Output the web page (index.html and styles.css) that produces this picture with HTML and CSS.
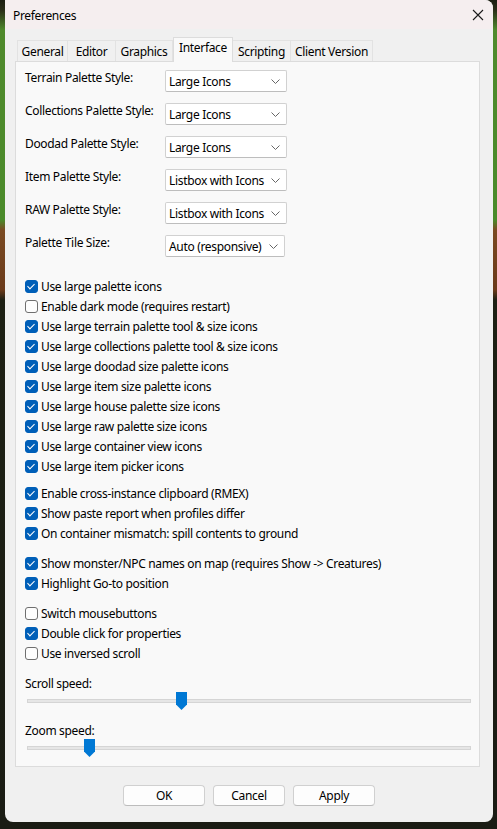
FILE: index.html
```html
<!DOCTYPE html>
<html>
<head>
<meta charset="utf-8">
<link rel="stylesheet" href="styles.css">
</head>
<body>
<div class="dialog">
  <div class="titlebar">
    <span class="title">Preferences</span>
    <svg class="close" width="12" height="12" viewBox="0 0 12 12"><path d="M1 1L11 11M11 1L1 11" stroke="#1a1a1a" stroke-width="1.1" fill="none"/></svg>
  </div>
  <div class="content">
    <div class="tabs">
      <div class="tab t1">General</div>
      <div class="tab t2">Editor</div>
      <div class="tab t3">Graphics</div>
      <div class="tab active">Interface</div>
      <div class="tab t5">Scripting</div>
      <div class="tab t6">Client Version</div>
    </div>
    <div class="panel">
      <div class="selects">
        <div class="srow"><span class="slabel">Terrain Palette Style:</span><div class="select"><span>Large Icons</span><svg class="chev" width="9" height="5" viewBox="0 0 9 5"><path d="M0.5 0.5L4.5 4.5L8.5 0.5" stroke="#666" fill="none"/></svg></div></div>
        <div class="srow"><span class="slabel">Collections Palette Style:</span><div class="select"><span>Large Icons</span><svg class="chev" width="9" height="5" viewBox="0 0 9 5"><path d="M0.5 0.5L4.5 4.5L8.5 0.5" stroke="#666" fill="none"/></svg></div></div>
        <div class="srow"><span class="slabel">Doodad Palette Style:</span><div class="select"><span>Large Icons</span><svg class="chev" width="9" height="5" viewBox="0 0 9 5"><path d="M0.5 0.5L4.5 4.5L8.5 0.5" stroke="#666" fill="none"/></svg></div></div>
        <div class="srow"><span class="slabel">Item Palette Style:</span><div class="select"><span>Listbox with Icons</span><svg class="chev" width="9" height="5" viewBox="0 0 9 5"><path d="M0.5 0.5L4.5 4.5L8.5 0.5" stroke="#666" fill="none"/></svg></div></div>
        <div class="srow"><span class="slabel">RAW Palette Style:</span><div class="select"><span>Listbox with Icons</span><svg class="chev" width="9" height="5" viewBox="0 0 9 5"><path d="M0.5 0.5L4.5 4.5L8.5 0.5" stroke="#666" fill="none"/></svg></div></div>
        <div class="srow"><span class="slabel">Palette Tile Size:</span><div class="select narrow"><span>Auto (responsive)</span><svg class="chev" width="9" height="5" viewBox="0 0 9 5"><path d="M0.5 0.5L4.5 4.5L8.5 0.5" stroke="#666" fill="none"/></svg></div></div>
      </div>

      <div class="group g1">
        <div class="check"><span class="box on"></span>Use large palette icons</div>
        <div class="check"><span class="box"></span>Enable dark mode (requires restart)</div>
        <div class="check"><span class="box on"></span>Use large terrain palette tool &amp; size icons</div>
        <div class="check"><span class="box on"></span>Use large collections palette tool &amp; size icons</div>
        <div class="check"><span class="box on"></span>Use large doodad size palette icons</div>
        <div class="check"><span class="box on"></span>Use large item size palette icons</div>
        <div class="check"><span class="box on"></span>Use large house palette size icons</div>
        <div class="check"><span class="box on"></span>Use large raw palette size icons</div>
        <div class="check"><span class="box on"></span>Use large container view icons</div>
        <div class="check"><span class="box on"></span>Use large item picker icons</div>
      </div>
      <div class="group g2">
        <div class="check"><span class="box on"></span>Enable cross-instance clipboard (RMEX)</div>
        <div class="check"><span class="box on"></span>Show paste report when profiles differ</div>
        <div class="check"><span class="box on"></span>On container mismatch: spill contents to ground</div>
      </div>
      <div class="group g3">
        <div class="check"><span class="box on"></span>Show monster/NPC names on map (requires Show -&gt; Creatures)</div>
        <div class="check"><span class="box on"></span>Highlight Go-to position</div>
      </div>
      <div class="group g3">
        <div class="check"><span class="box"></span>Switch mousebuttons</div>
        <div class="check"><span class="box on"></span>Double click for properties</div>
        <div class="check"><span class="box"></span>Use inversed scroll</div>
      </div>

      <div class="slider-label first">Scroll speed:</div>
      <div class="slider"><div class="track"></div><div class="thumb" style="left:149px"></div></div>
      <div class="slider-label">Zoom speed:</div>
      <div class="slider"><div class="track"></div><div class="thumb" style="left:57px"></div></div>
    </div>
    <div class="buttons">
      <div class="btn ok">OK</div>
      <div class="btn cancel">Cancel</div>
      <div class="btn apply">Apply</div>
    </div>
  </div>
</div>
</body>
</html>
```
FILE: styles.css
```css
* { box-sizing: border-box; }
html, body { margin: 0; padding: 0; }
body {
  width: 497px;
  height: 829px;
  overflow: hidden;
  background: linear-gradient(to bottom, #1c1f12 0px, #2a2e18 10px, #4f8a2c 30px, #4a8a2a 220px, #7a4a22 230px, #6a3a1a 290px, #1d2014 300px, #1a1c14 829px);
  font-family: "Noto Sans", "Open Sans", sans-serif;
  font-size: 12px;
  letter-spacing: -0.33px;
  color: #000;
}
.dialog {
  margin-left: 5px;
  width: 488px;
  height: 822px;
  background: #f0f0f0;
  border-radius: 0 8px 8px 8px;
  overflow: hidden;
  display: flex;
  flex-direction: column;
}
.titlebar {
  height: 29px;
  background: #f5eeef;
  display: flex;
  align-items: center;
  justify-content: space-between;
  padding: 0 9px 0 8px;
  flex-shrink: 0;
}
.title { font-size: 12px; padding-top: 1px; }
.close { margin-top: 1px; }
.content {
  flex: 1;
  padding: 10px 13px 0 10px;
  display: flex;
  flex-direction: column;
}
.tabs {
  display: flex;
  align-items: flex-end;
  height: 22px;
  padding-left: 2px;
  position: relative;
  z-index: 1;
}
.tab {
  height: 21px;
  border: 1px solid #e2e2e2;
  border-bottom: none;
  background: #f0f0f0;
  line-height: 20px;
  padding-top: 1px;
  text-align: center;
}
.t1 { width: 51px; }
.t2 { width: 48px; border-left: none; }
.t3 { width: 57px; border-left: none; }
.active {
  width: 60px;
  height: 25px;
  background: #f9f9f9;
  border-color: #dcdcdc;
  line-height: 18px;
  margin-bottom: -1px;
}
.t5 { width: 58px; border-left: none; }
.t6 { width: 82px; border-left: none; }
.panel {
  height: 706px;
  background: #f9f9f9;
  border: 1px solid #dcdcdc;
  padding: 8px 9px 0 9px;
  display: flex;
  flex-direction: column;
}
.selects { display: flex; flex-direction: column; gap: 11px; }
.srow {
  display: flex;
  align-items: flex-start;
  height: 22px;
}
.slabel { width: 140px; line-height: 14px; padding-top: 1px; }
.select {
  width: 122px;
  height: 22px;
  background: #fff;
  border: 1px solid #d1d1d1;
  border-bottom-color: #bdbdbd;
  border-radius: 2px;
  display: flex;
  align-items: center;
  justify-content: space-between;
  padding: 0 6px 0 3px;
}
.select.narrow { width: 120px; }
.group { display: flex; flex-direction: column; }
.g1 { margin-top: 19px; }
.g2 { margin-top: 7px; }
.g3 { margin-top: 10px; }
.check {
  height: 20px;
  display: flex;
  align-items: center;
  white-space: nowrap;
}
.box {
  width: 13px;
  height: 13px;
  border: 1px solid #6f6f6f;
  border-radius: 3px;
  background: #fdfdfd;
  margin-right: 3px;
  flex-shrink: 0;
  position: relative;
}
.box.on {
  background: #005fb8;
  border-color: #005fb8;
}
.box.on::after {
  content: "";
  position: absolute;
  left: 3px;
  top: 1px;
  width: 3px;
  height: 6px;
  border-right: 1.2px solid #fff;
  border-bottom: 1.2px solid #fff;
  transform: rotate(45deg);
}
.slider-label { margin-top: 11px; height: 16px; line-height: 16px; }
.slider-label.first { margin-top: 13px; }
.slider {
  position: relative;
  height: 20px;
  margin: 0 0 0 2px;
  width: 444px;
}
.track {
  position: absolute;
  left: 0;
  right: 0;
  top: 7px;
  height: 4px;
  background: #e6e6e6;
  border: 1px solid #d5d5d5;
}
.thumb {
  position: absolute;
  top: 0;
  width: 11px;
  height: 18px;
  background: #0078d4;
  clip-path: polygon(0 0, 100% 0, 100% 70%, 50% 100%, 0 70%);
}
.buttons {
  display: flex;
  justify-content: center;
  gap: 8px;
  margin-top: 18px;
  padding-left: 3px;
}
.btn {
  height: 21px;
  background: #fdfdfd;
  border: 1px solid #d0d0d0;
  border-bottom-color: #bcbcbc;
  border-radius: 4px;
  text-align: center;
  line-height: 19px;
}
.ok { width: 82px; }
.cancel { width: 72px; }
.apply { width: 82px; }
```
